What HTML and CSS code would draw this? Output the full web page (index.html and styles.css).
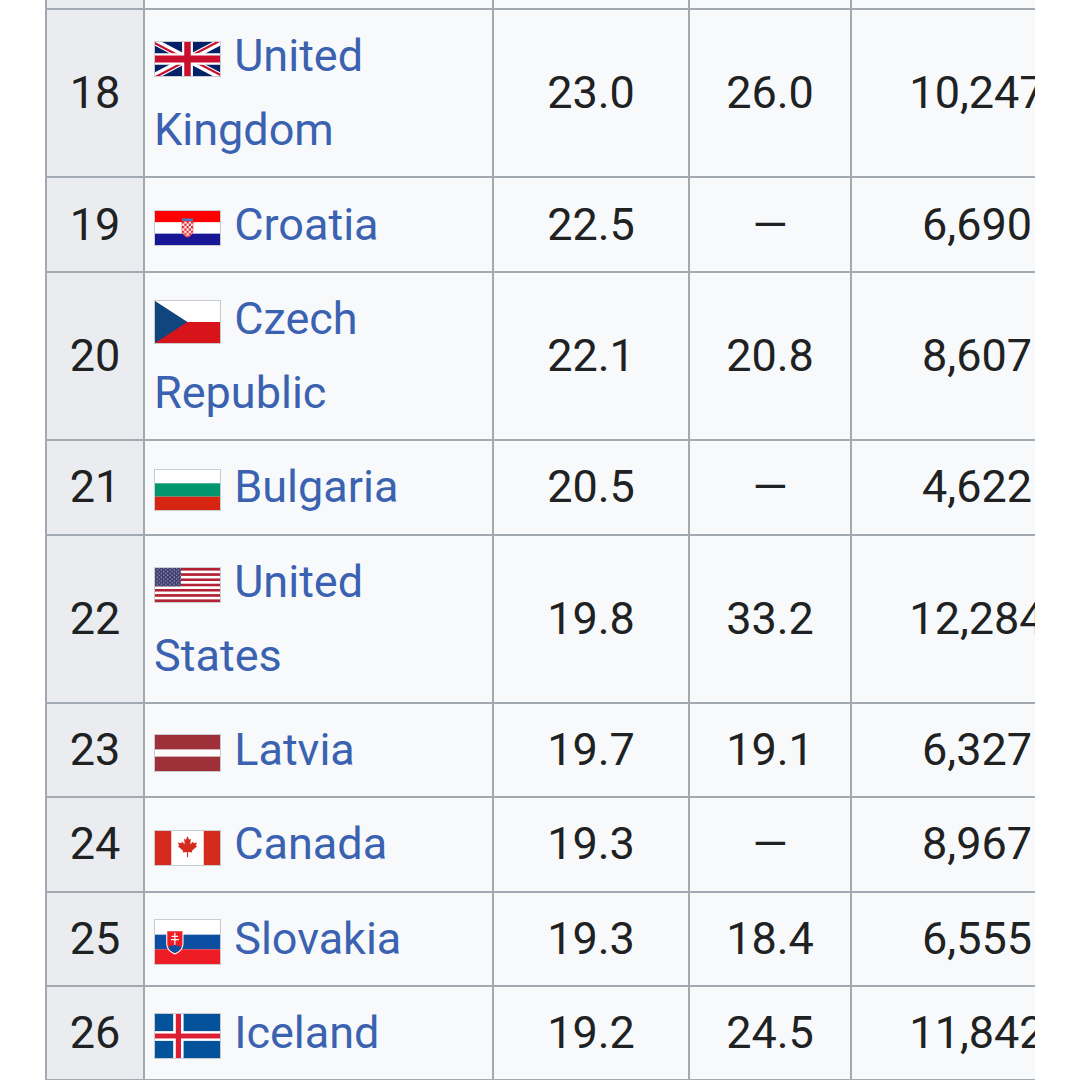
FILE: index.html
```html
<!DOCTYPE html>
<html lang="en">
<head>
<meta charset="utf-8">
<title>Table</title>
<link rel="stylesheet" href="styles.css">
</head>
<body>
<div class="scroller">
<table class="wikitable">
<colgroup>
<col class="c-rank"><col class="c-country"><col class="c-a"><col class="c-b"><col class="c-c">
</colgroup>
<tbody>
<tr class="spacer"><th></th><td></td><td></td><td></td><td></td></tr>
<tr>
<th class="rank">18</th>
<td class="country"><span class="flag f36"><svg viewBox="0 0 60 30" preserveAspectRatio="none"><clipPath id="ukt"><path d="M30,15 h30 v15 z v15 h-30 z h-30 v-15 z v-15 h30 z"/></clipPath><rect width="60" height="30" fill="#012169"/><path d="M0,0 L60,30 M60,0 L0,30" stroke="#fff" stroke-width="6"/><path d="M0,0 L60,30 M60,0 L0,30" clip-path="url(#ukt)" stroke="#C8102E" stroke-width="4"/><path d="M30,0 v30 M0,15 h60" stroke="#fff" stroke-width="10"/><path d="M30,0 v30 M0,15 h60" stroke="#C8102E" stroke-width="6"/></svg></span> <a href="#">United Kingdom</a></td>
<td>23.0</td><td>26.0</td><td>10,247</td>
</tr>
<tr>
<th class="rank">19</th>
<td class="country"><span class="flag f36"><svg viewBox="0 0 100 50" preserveAspectRatio="none"><defs><pattern id="hrck" x="41.5" y="15" width="7" height="7" patternUnits="userSpaceOnUse"><rect width="7" height="7" fill="#fff"/><rect width="3.5" height="3.5" fill="#e8202a"/><rect x="3.5" y="3.5" width="3.5" height="3.5" fill="#e8202a"/></pattern></defs><rect width="100" height="16.7" fill="#ff0000"/><rect y="16.7" width="100" height="16.6" fill="#fff"/><rect y="33.3" width="100" height="16.7" fill="#171796"/><path d="M41.5,11 h17 v4 h-17 z" fill="#3d7fd0"/><path d="M41.5,15 h17 v13 c0,6 -4,9 -8.5,11 c-4.5,-2 -8.5,-5 -8.5,-11 z" fill="url(#hrck)" stroke="#e8202a" stroke-width="0.8"/></svg></span> <a href="#">Croatia</a></td>
<td>22.5</td><td>—</td><td>6,690</td>
</tr>
<tr>
<th class="rank">20</th>
<td class="country"><span class="flag f43"><svg viewBox="0 0 6 4" preserveAspectRatio="none"><rect width="6" height="2" fill="#fff"/><rect y="2" width="6" height="2" fill="#d7141a"/><path d="M0,0 L3,2 L0,4 z" fill="#11457e"/></svg></span> <a href="#">Czech Republic</a></td>
<td>22.1</td><td>20.8</td><td>8,607</td>
</tr>
<tr>
<th class="rank">21</th>
<td class="country"><span class="flag f42"><svg viewBox="0 0 5 3" preserveAspectRatio="none"><rect width="5" height="1" fill="#fff"/><rect y="1" width="5" height="1" fill="#00966e"/><rect y="2" width="5" height="1" fill="#d62612"/></svg></span> <a href="#">Bulgaria</a></td>
<td>20.5</td><td>—</td><td>4,622</td>
</tr>
<tr>
<th class="rank">22</th>
<td class="country"><span class="flag f36"><svg viewBox="0 0 190 100" preserveAspectRatio="none"><defs><pattern id="usst" width="190" height="15.3846" patternUnits="userSpaceOnUse"><rect width="190" height="7.6923" fill="#b22234"/><rect y="7.6923" width="190" height="7.6923" fill="#fff"/></pattern><pattern id="usstar" x="3" y="2.5" width="12.6" height="10.7" patternUnits="userSpaceOnUse"><circle cx="3.2" cy="3" r="1.7" fill="#fff"/><circle cx="9.5" cy="8.35" r="1.7" fill="#fff"/></pattern></defs><rect width="190" height="100" fill="url(#usst)"/><rect width="76" height="53.85" fill="#3c3b6e"/><rect width="76" height="53.85" fill="url(#usstar)"/></svg></span> <a href="#">United States</a></td>
<td>19.8</td><td>33.2</td><td>12,284</td>
</tr>
<tr>
<th class="rank">23</th>
<td class="country"><span class="flag f37"><svg viewBox="0 0 20 10" preserveAspectRatio="none"><rect width="20" height="10" fill="#9e3039"/><rect y="4" width="20" height="2" fill="#fff"/></svg></span> <a href="#">Latvia</a></td>
<td>19.7</td><td>19.1</td><td>6,327</td>
</tr>
<tr>
<th class="rank">24</th>
<td class="country"><span class="flag f36"><svg viewBox="0 0 40 20" preserveAspectRatio="none"><rect width="40" height="20" fill="#fff"/><rect width="10" height="20" fill="#d52b1e"/><rect x="30" width="10" height="20" fill="#d52b1e"/><path d="M20,3 L21,5.2 L22.1,4.6 L21.7,8 L23.4,6.2 L23.8,7.2 L25.9,6.8 L25.1,8.6 L25.9,9 L22.6,11.7 L23,12.7 L20.35,12.3 L20.35,15.5 L19.65,15.5 L19.65,12.3 L17,12.7 L17.4,11.7 L14.1,9 L14.9,8.6 L14.1,6.8 L16.2,7.2 L16.6,6.2 L18.3,8 L17.9,4.6 L19,5.2 z" fill="#d52b1e"/></svg></span> <a href="#">Canada</a></td>
<td>19.3</td><td>—</td><td>8,967</td>
</tr>
<tr>
<th class="rank">25</th>
<td class="country"><span class="flag f45"><svg viewBox="0 0 9 6" preserveAspectRatio="none"><rect width="9" height="2" fill="#fff"/><rect y="2" width="9" height="2" fill="#0b4ea2"/><rect y="4" width="9" height="2" fill="#ee1c25"/><path d="M1.55,1.4 h2.4 v1.7 c0,0.95 -0.55,1.35 -1.2,1.6 c-0.65,-0.25 -1.2,-0.65 -1.2,-1.6 z" fill="#fff"/><path d="M1.7,1.55 h2.1 v1.55 c0,0.85 -0.48,1.2 -1.05,1.43 c-0.57,-0.23 -1.05,-0.58 -1.05,-1.43 z" fill="#ee1c25"/><path d="M2.67,1.75 h0.16 v1.9 h-0.16 z M2.3,2.150 h0.9 v0.16 h-0.9 z M2.2,2.6 h1.1 v0.17 h-1.1 z" fill="#fff"/><path d="M1.85,3.75 c0.3,-0.35 0.5,-0.35 0.62,-0.15 c0.15,-0.3 0.45,-0.3 0.58,0 c0.15,-0.2 0.35,-0.2 0.6,0.15 c-0.2,0.4 -0.5,0.6 -0.9,0.75 c-0.4,-0.15 -0.7,-0.35 -0.9,-0.75 z" fill="#0b4ea2"/></svg></span> <a href="#">Slovakia</a></td>
<td>19.3</td><td>18.4</td><td>6,555</td>
</tr>
<tr>
<th class="rank">26</th>
<td class="country"><span class="flag f45"><svg viewBox="0 0 25 18" preserveAspectRatio="none"><rect width="25" height="18" fill="#02529c"/><rect x="7" width="4" height="18" fill="#fff"/><rect y="7" width="25" height="4" fill="#fff"/><rect x="8" width="2" height="18" fill="#dc1e35"/><rect y="8" width="25" height="2" fill="#dc1e35"/></svg></span> <a href="#">Iceland</a></td>
<td>19.2</td><td>24.5</td><td>11,842</td>
</tr>
</tbody>
</table>
</div>
</body>
</html>
```

FILE: styles.css
```css
html, body {
  margin: 0;
  padding: 0;
  background: #ffffff;
}

body {
  font-family: Roboto, "Noto Sans", "Liberation Sans", sans-serif;
  color: #202122;
  font-size: 45px;
  line-height: 74px;
}

.scroller {
  margin-left: 45px;
  width: 990px;
  height: 1080px;
  overflow: hidden;
}

.wikitable {
  table-layout: fixed;
  border-collapse: separate;
  border-spacing: 0;
  width: 1059px;
  border-left: 2px solid #a2a9b1;
  background: #f8f9fa;
}

.c-rank { width: 98px; }
.c-country { width: 349px; }
.c-a { width: 196px; }
.c-b { width: 162px; }
.c-c { width: 252px; }

.wikitable th,
.wikitable td {
  border-right: 2px solid #a2a9b1;
  border-bottom: 2px solid #a2a9b1;
  padding: 9.2px 9px;
  text-align: center;
  vertical-align: middle;
  font-weight: normal;
}

.wikitable th {
  background: #eaecf0;
}

.wikitable .spacer th,
.wikitable .spacer td {
  height: 8px;
  padding: 0;
  line-height: 0;
  font-size: 0;
}

.wikitable td.country {
  text-align: left;
  padding-left: 9px;
}

.country a {
  color: #3a62b0;
  text-decoration: none;
}

.flag {
  display: inline-block;
  vertical-align: middle;
  width: 65px;
  margin-right: 2px;
  border: 1px solid #c8ccd1;
  line-height: 0;
}

.flag svg {
  display: block;
  width: 65px;
  height: 100%;
}

.f36 { height: 34px; }
.f37 { height: 36px; }
.f42 { height: 40px; }
.f43 { height: 42px; }
.f45 { height: 44px; }
```
